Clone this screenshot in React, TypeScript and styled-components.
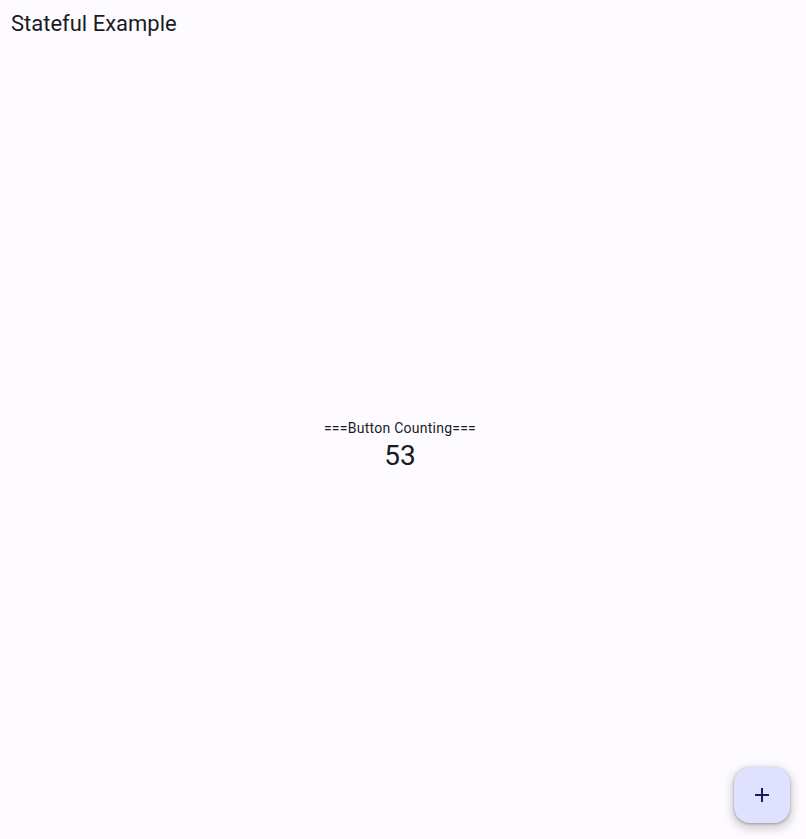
import React, { useState } from "react";
import styled, { createGlobalStyle } from "styled-components";

const Global = createGlobalStyle`
  html, body { margin: 0; padding: 0; background: #fdfbff; }
  body { font-family: Roboto, "Noto Sans", sans-serif; color: #1b1b1f; }
`;

const Page = styled.div`
  position: relative;
  display: flex;
  flex-direction: column;
  width: 100%;
  height: 839px;
  background: #fdfbff;
  overflow: hidden;
`;

const AppBar = styled.header`
  display: flex;
  align-items: center;
  height: 48px;
  padding: 0 11px;
  flex-shrink: 0;
`;

const Title = styled.h1`
  margin: 0;
  font-size: 22px;
  font-weight: 400;
  line-height: 28px;
  color: #1b1b1f;
`;

const Body = styled.main`
  flex: 1;
  display: flex;
  flex-direction: column;
  align-items: center;
  justify-content: center;
  padding: 5px 6px 0 0;
`;

const Label = styled.div`
  font-size: 14px;
  line-height: 20px;
  letter-spacing: 0.25px;
  color: #1b1b1f;
`;

const Count = styled.div`
  font-size: 28px;
  line-height: 36px;
  color: #1b1b1f;
`;

const Fab = styled.button`
  position: absolute;
  right: 16px;
  bottom: 16px;
  width: 56px;
  height: 56px;
  border: none;
  border-radius: 16px;
  background: #e0e0ff;
  color: #1a1b5c;
  display: flex;
  align-items: center;
  justify-content: center;
  cursor: pointer;
  box-shadow: 0 1px 3px rgba(0, 0, 0, 0.3), 0 4px 8px 3px rgba(0, 0, 0, 0.15);
  padding: 0;
`;

export default function App() {
  const [count, setCount] = useState(53);
  return (
    <Page>
      <Global />
      <AppBar>
        <Title>Stateful Example</Title>
      </AppBar>
      <Body>
        <Label>===Button Counting===</Label>
        <Count>{count}</Count>
      </Body>
      <Fab onClick={() => setCount((c) => c + 1)} aria-label="Increment">
        <svg width="24" height="24" viewBox="0 0 24 24">
          <path d="M19 13h-6v6h-2v-6H5v-2h6V5h2v6h6v2z" fill="currentColor" />
        </svg>
      </Fab>
    </Page>
  );
}
